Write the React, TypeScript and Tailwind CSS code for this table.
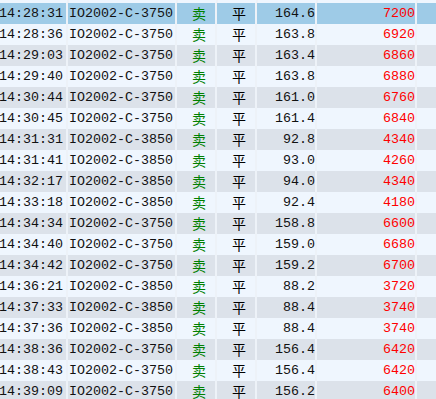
const rows: [string, string, string, string][] = [
  ["14:28:31", "3750", "164.6", "7200"],
  ["14:28:36", "3750", "163.8", "6920"],
  ["14:29:03", "3750", "163.4", "6860"],
  ["14:29:40", "3750", "163.8", "6880"],
  ["14:30:44", "3750", "161.0", "6760"],
  ["14:30:45", "3750", "161.4", "6840"],
  ["14:31:31", "3850", "92.8", "4340"],
  ["14:31:41", "3850", "93.0", "4260"],
  ["14:32:17", "3850", "94.0", "4340"],
  ["14:33:18", "3850", "92.4", "4180"],
  ["14:34:34", "3750", "158.8", "6600"],
  ["14:34:40", "3750", "159.0", "6680"],
  ["14:34:42", "3750", "159.2", "6700"],
  ["14:36:21", "3850", "88.2", "3720"],
  ["14:37:33", "3850", "88.4", "3740"],
  ["14:37:36", "3850", "88.4", "3740"],
  ["14:38:36", "3750", "156.4", "6420"],
  ["14:38:43", "3750", "156.4", "6420"],
  ["14:39:09", "3750", "156.2", "6400"],
];

const mono = "font-['Liberation_Mono',monospace] text-[13.33px]";
const cjk = "font-['Noto_Sans_CJK_SC',sans-serif] text-[14px]";
const cell = "h-full flex items-center border-r-2 border-[#edf2f8]";

export default function App() {
  return (
    <div className="h-[399px] w-[436px] overflow-hidden bg-[#eff6fe] leading-none text-black">
      <div className="h-[3px] flex">
        <div className="w-[69px] h-full border-r-2 border-[#edf2f8]" />
        <div className="w-[109px] h-full border-r-2 border-[#edf2f8]" />
        <div className="w-[40px] h-full border-r-2 border-[#edf2f8]" />
        <div className="w-[40px] h-full border-r-2 border-[#edf2f8]" />
        <div className="w-[60px] h-full border-r-2 border-[#edf2f8]" />
        <div className="w-[100px] h-full border-r-2 border-[#edf2f8]" />
      </div>
      {rows.map(([time, strike, price, vol], i) => {
        const bg = i === 0 ? "bg-[#9ecbe7]" : i % 2 === 0 ? "bg-[#dce2ea]" : "bg-[#eff6fe]";
        return (
          <div key={i} className={`flex h-[21px] ${bg}`}>
            <div className={`${cell} ${mono} w-[69px] -ml-[1px] text-[#111]`}>{time}</div>
            <div className={`${cell} ${mono} w-[109px] pl-[1px] text-[#111]`}>IO2002-C-{strike}</div>
            <div className={`${cell} ${cjk} w-[40px] justify-center pl-[6px] pb-[1px] text-[#008000]`}>卖</div>
            <div className={`${cell} ${cjk} w-[40px] justify-center pl-[6px] pb-[1px]`}>平</div>
            <div className={`${cell} ${mono} w-[60px] justify-end text-[#111]`}>{price}</div>
            <div className={`${cell} ${mono} w-[100px] justify-end text-[#ff0000]`}>{vol}</div>
            <div className="flex-1" />
          </div>
        );
      })}
    </div>
  );
}
